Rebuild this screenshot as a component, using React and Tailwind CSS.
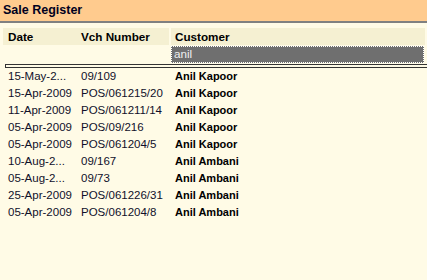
import React from 'react'

const rows = [
  { date: '15-May-2...', vch: '09/109', customer: 'Anil Kapoor' },
  { date: '15-Apr-2009', vch: 'POS/061215/20', customer: 'Anil Kapoor' },
  { date: '11-Apr-2009', vch: 'POS/061211/14', customer: 'Anil Kapoor' },
  { date: '05-Apr-2009', vch: 'POS/09/216', customer: 'Anil Kapoor' },
  { date: '05-Apr-2009', vch: 'POS/061204/5', customer: 'Anil Kapoor' },
  { date: '10-Aug-2...', vch: '09/167', customer: 'Anil Ambani' },
  { date: '05-Aug-2...', vch: '09/73', customer: 'Anil Ambani' },
  { date: '25-Apr-2009', vch: 'POS/061226/31', customer: 'Anil Ambani' },
  { date: '05-Apr-2009', vch: 'POS/061204/8', customer: 'Anil Ambani' },
]

const App = () => {
  return (
    <div className="w-[427px] h-[280px] overflow-hidden bg-[#fffbe6] font-['Liberation_Sans',Arial,sans-serif] text-black">
      {/* title bar */}
      <div className="h-[23px] bg-[#ffcb8e] border-b-2 border-[#808080] pl-[3px] text-[12.5px] font-bold leading-[21px] text-[#000020]">
        Sale Register
      </div>

      {/* column headers */}
      <div className="pt-[5px] pl-[3px] pr-[2px]">
        <div className="flex h-[17px] text-[11.7px] font-bold leading-[17px]">
          <div className="w-[73px] bg-[#f5f0d2] pl-[5px]">Date</div>
          <div className="w-[93px] bg-[#f5f0d2] pl-[5px]">Vch Number</div>
          <div className="ml-[2px] flex-1 bg-[#f5f0d2] pl-[4px]">Customer</div>
        </div>

        {/* filter row */}
        <div className="flex h-[17px] mt-[1px]">
          <div className="w-[168px]" />
          <div className="flex-1 mr-[1px] bg-[#6f6f6f] border border-dotted border-white pl-[2px] text-[11.7px] leading-[14px] text-[#f0f0f0]">
            anil
          </div>
        </div>
      </div>

      {/* separator */}
      <div className="ml-[5px] mt-[1px] h-[4px] border border-r-0 border-[#333333]" />

      {/* data rows */}
      <div className="pl-[8px]">
        {rows.map((r, i) => (
          <div key={i} className="flex h-[17px] leading-[17px] text-[11.5px] whitespace-nowrap">
            <div className="w-[73px] text-[#10102a]">{r.date}</div>
            <div className="w-[94px] text-[#10102a]">{r.vch}</div>
            <div className="font-bold text-[11px]">{r.customer}</div>
          </div>
        ))}
      </div>
    </div>
  )
}

export default App
